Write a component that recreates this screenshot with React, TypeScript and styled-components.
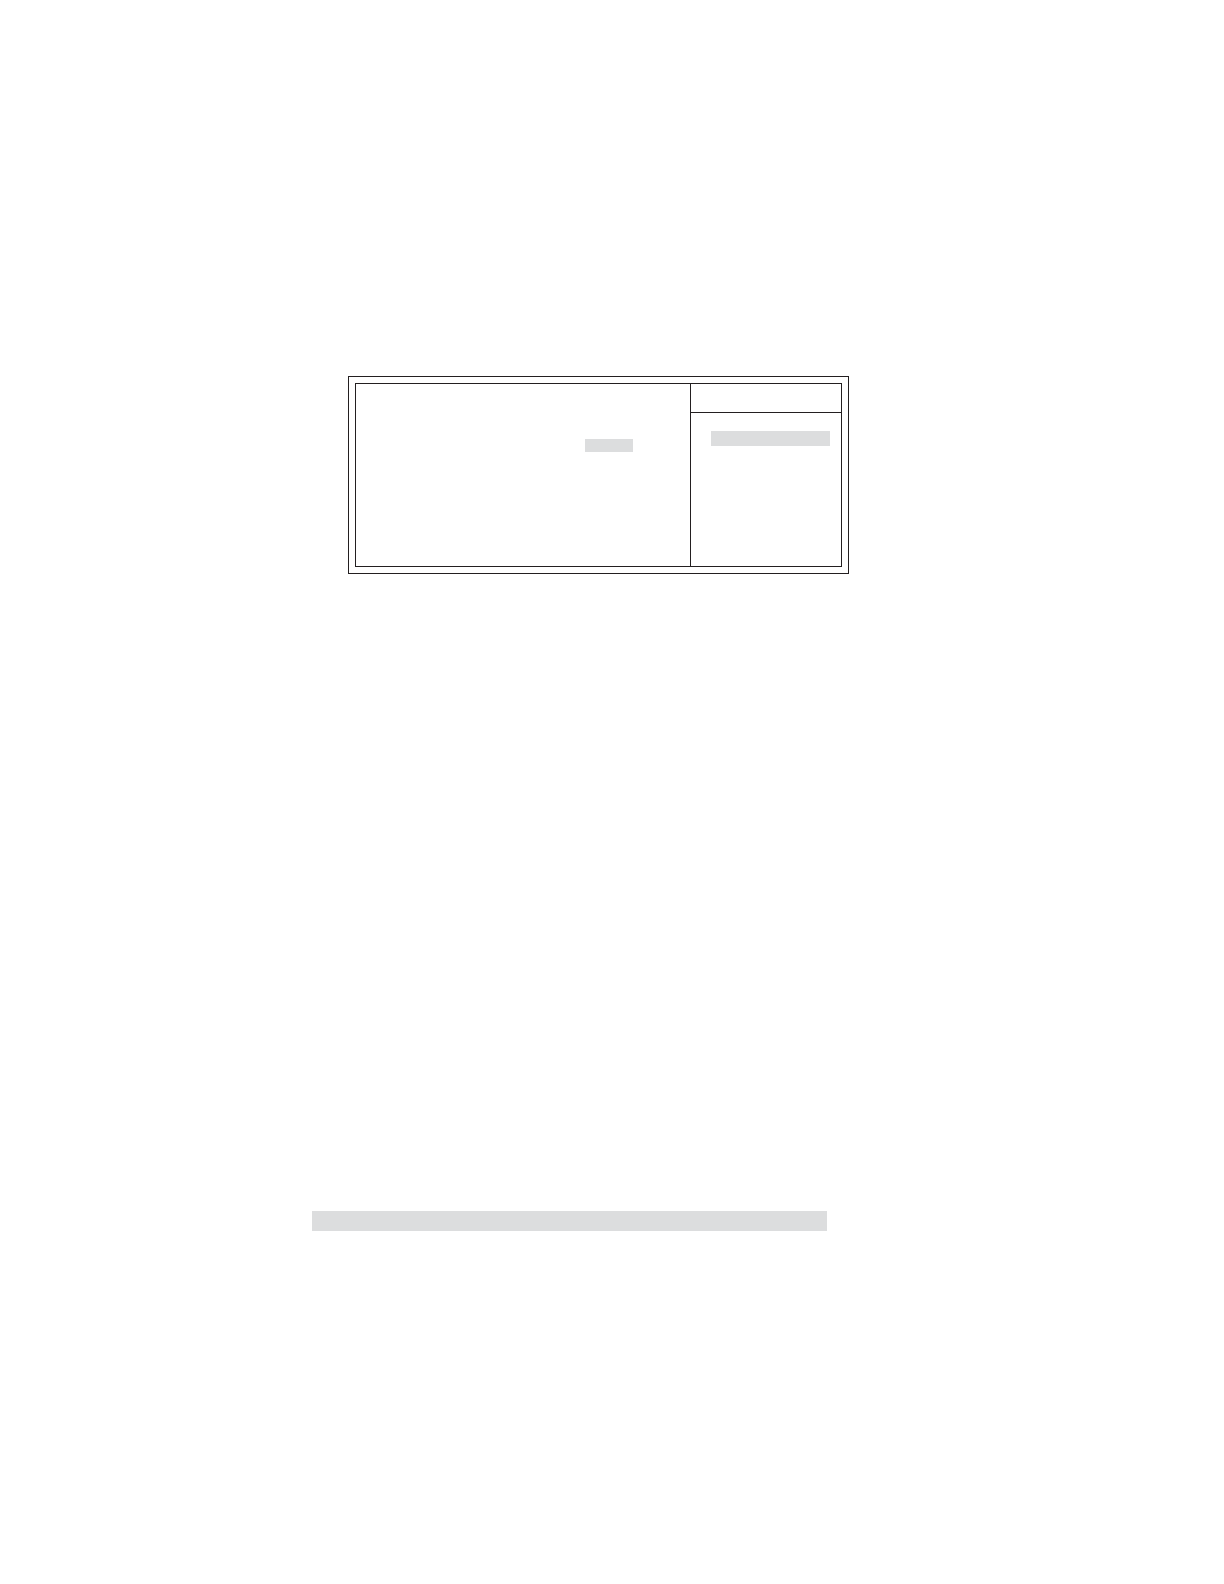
import React from "react";
import styled, { createGlobalStyle } from "styled-components";

const line = "#231f20";
const shade = "#dcddde";

const GlobalStyle = createGlobalStyle`
  *, *::before, *::after { box-sizing: border-box; }
  body {
    margin: 0;
    background: #ffffff;
    color: ${line};
    font-family: "Liberation Sans", Arial, sans-serif;
  }
`;

const Page = styled.main`
  display: grid;
  grid-template-columns: 312fr 537fr 375fr;
  min-height: 100vh;
  padding: 376px 0 0;
`;

const Content = styled.div`
  grid-column: 2;
  display: flex;
  flex-direction: column;
  gap: 637px;
`;

const SetupFrame = styled.section`
  margin-left: 36px;
  padding: 6px;
  border: 1px solid ${line};
`;

const SetupScreen = styled.div`
  display: grid;
  grid-template-columns: 1fr 151px;
  min-height: 184px;
  border: 1px solid ${line};
`;

const Settings = styled.div`
  display: flex;
  justify-content: flex-end;
  align-items: flex-start;
  padding: 55px 57px 0 0;
`;

const Help = styled.aside`
  border-left: 1px solid ${line};
`;

const HelpHeader = styled.header`
  height: 29px;
  border-bottom: 1px solid ${line};
`;

const HelpBody = styled.div`
  padding: 18px 11px 0 20px;
`;

const Highlight = styled.div<{ $height: number; $width?: number }>`
  width: ${({ $width }) => ($width ? `${$width}px` : "auto")};
  height: ${({ $height }) => $height}px;
  background: ${shade};
`;

const Footer = styled.footer`
  padding-right: 22px;
`;

export default function App() {
  return (
    <>
      <GlobalStyle />
      <Page>
        <Content>
          <SetupFrame>
            <SetupScreen>
              <Settings>
                <Highlight $width={48} $height={13} />
              </Settings>
              <Help>
                <HelpHeader />
                <HelpBody>
                  <Highlight $height={15} />
                </HelpBody>
              </Help>
            </SetupScreen>
          </SetupFrame>
          <Footer>
            <Highlight $height={20} />
          </Footer>
        </Content>
      </Page>
    </>
  );
}
